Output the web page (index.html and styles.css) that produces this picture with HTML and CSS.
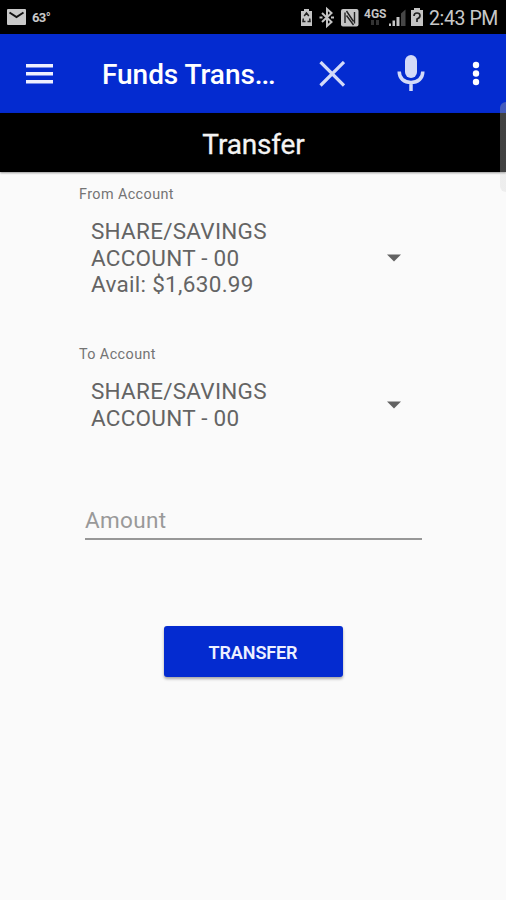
FILE: index.html
```html
<!DOCTYPE html>
<html lang="en">
<head>
<meta charset="utf-8">
<title>Funds Transfer</title>
<link rel="stylesheet" href="styles.css">
</head>
<body>
<div class="status">
  <svg class="mail" width="19" height="16" viewBox="0 0 19 16"><rect width="19" height="16" rx="1" fill="#c9c9c9"/><path d="M2.500 3.500l7 4.500 7-4.500" fill="none" stroke="#111" stroke-width="2"/></svg>
  <span class="temp">63°</span>
  <svg class="icons" width="126" height="34" viewBox="0 0 126 34" fill="#c4c4c4">
    <path d="M2 11h3V9h5v2h3v15H2z"/><path d="M5.200 16l2.300-3 2.300 3M4.300 18.500l-.3 3h2.500M10.700 18.500l.3 3H8.500" fill="none" stroke="#222" stroke-width="1.500"/>
    <path d="M23 13l9.500 9-4.500 4V9l4.500 4-9.500 9M20.500 17.500h3M32 17.500h3" fill="none" stroke="#c4c4c4" stroke-width="2"/>
    <rect x="42" y="9" width="17.500" height="17.500" rx="2"/><path d="M46 23V12.500M47.500 11l7 10.500M47.500 15.500l7 9.500M55.500 12v11.500" fill="none" stroke="#222" stroke-width="1.400"/>
    <text class="net" x="65" y="18" textLength="22.500" lengthAdjust="spacingAndGlyphs">4GS</text>
    <path d="M72 20h3v5h-3zM77 20h3v5h-3z" fill="#333"/>
    <path d="M90 23.500h2V26h-2zM93.500 20.500H96V26h-2.500zM97.500 17h3v9h-3z"/><path d="M102 13.500l4.500-4V26H102z" fill="#464646"/>
    <path d="M112 10h3V8h6v2h3v16h-12z"/><path d="M115 16q0-3 3-3t3 2.500-3 3.500v3" fill="none" stroke="#222" stroke-width="1.700"/>
  </svg>
  <span class="clock">2:43 PM</span>
</div>
<header class="appbar">
  <svg class="menu" width="27" height="20" viewBox="0 0 27 20"><path d="M0 1.700h27M0 9.700h27M0 17.700h27" stroke="#eef0ff" stroke-width="3.500"/></svg>
  <h1>Funds Trans<span class="dots">...</span></h1>
  <svg class="close" width="26" height="26" viewBox="0 0 26 26"><path d="M1.500 1l23.500 23.500M25 1L1.500 24.500" stroke="#d3daf8" stroke-width="3.200"/></svg>
  <svg class="mic" width="28" height="38" viewBox="0 0 28 38"><rect x="8" y="0" width="12" height="23" rx="6" fill="#d3daf8"/><path d="M2.200 16.500c0 7 5 11 11.800 11s11.800-4 11.800-11M14 27v9" fill="none" stroke="#d3daf8" stroke-width="3.500"/></svg>
  <svg class="more" width="8" height="26" viewBox="0 0 8 26" fill="#fff"><circle cx="4" cy="4" r="3.200"/><circle cx="4" cy="12.500" r="3.200"/><circle cx="4" cy="21" r="3.200"/></svg>
</header>
<h2 class="heading">Transfer</h2>
<div class="edge"></div>
<main>
  <section class="field from">
    <div class="label">From Account</div>
    <div class="spinner"><div>SHARE/SAVINGS<br>ACCOUNT - 00<br><span class="avail">Avail: $1,630.99</span></div>
    <svg width="14" height="8" viewBox="0 0 14 8"><path d="M0 .5h14L7 7.500z" fill="#626262"/></svg></div>
  </section>
  <section class="field to">
    <div class="label">To Account</div>
    <div class="spinner"><div>SHARE/SAVINGS<br>ACCOUNT - 00</div>
    <svg width="14" height="8" viewBox="0 0 14 8"><path d="M0 .5h14L7 7.500z" fill="#626262"/></svg></div>
  </section>
  <div class="amount">Amount</div>
  <button class="submit">TRANSFER</button>
</main>
</body>
</html>
```
FILE: styles.css
```css
* { box-sizing: border-box; }
body { margin: 0; height: 900px; background: #fafafa; font-family: Roboto, "Liberation Sans", sans-serif; position: relative; overflow: hidden; }
svg { display: block; flex: none; }
.status { height: 34px; background: #000; color: #c8c8c8; display: flex; align-items: center; }
.mail { margin-left: 7px; }
.temp { font-size: 13px; font-weight: 700; margin-left: 6px; width: 20px; letter-spacing: -.6px; }
.icons { margin-left: 247px; }
.net { font-size: 12px; font-weight: 700; }
.clock { font-size: 19.5px; letter-spacing: -.4px; margin-left: 4px; padding-top: 2px; white-space: nowrap; }
.appbar { height: 79px; background: #042bd0; display: flex; align-items: center; color: #fff; }
.menu { margin-left: 26px; }
h1 { margin: 3px 0 0 49px; width: 217px; font-size: 28px; line-height: 34px; font-weight: 500; white-space: nowrap; letter-spacing: -.05px; }
.dots { letter-spacing: -1.2px; }
.mic { margin-left: 52px; }
.more { margin-left: 46.5px; }
.heading { margin: 0; height: 59px; background: #000; color: #f4f4f4; font-size: 28px; line-height: 63px; font-weight: 400; text-align: center; letter-spacing: -.15px; text-indent: 1px; -webkit-text-stroke: .3px #f4f4f4; box-shadow: 0 1px 2px #0006; }
.edge { position: absolute; right: 0; top: 102px; width: 6px; height: 90px; border-radius: 6px 0 0 6px; background: linear-gradient(#a0a0a068 70px, #c8c8c840 70px); }
main { padding: 14px 79px 0; display: flex; flex-direction: column; }
.field { height: 160px; }
.label { font-size: 14.4px; line-height: 18px; height: 17px; color: #747474; letter-spacing: .4px; }
.spinner { display: flex; align-items: center; justify-content: space-between; margin-top: 15px; padding: 0 26px 0 12px; font-size: 22.5px; line-height: 26.7px; letter-spacing: .25px; color: #646464; }
.avail { letter-spacing: .3px; }
.amount { margin: 0 5px 0 6px; height: 34px; border-bottom: 2px solid #979797; color: #999; font-size: 22.5px; line-height: 28px; letter-spacing: .35px; }
.submit { align-self: center; margin: 86px 0 0; width: 179px; height: 50.5px; padding: 2px 0 0; border: 0; border-radius: 3px; background: #042bd0; color: #edf0ff; font: 600 18px Roboto, "Liberation Sans", sans-serif; letter-spacing: -.1px; box-shadow: 0 2px 3px #0005; }
```
